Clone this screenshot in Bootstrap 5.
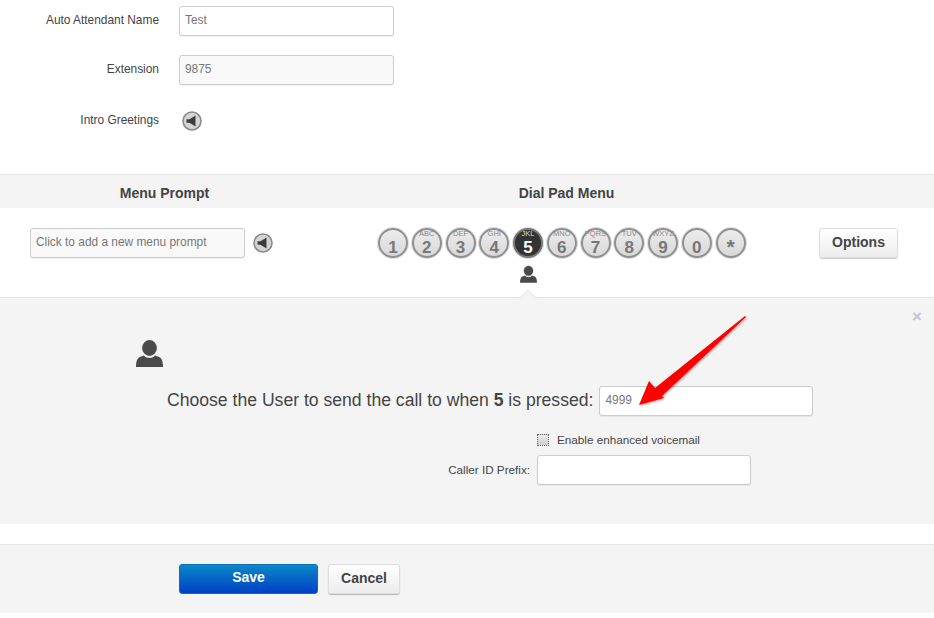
<!DOCTYPE html>
<html lang="en">
<head>
    <meta charset="UTF-8">
    <meta name="viewport" content="width=device-width, initial-scale=1.0">
    <title>Auto Attendant</title>
    <link href="https://cdn.jsdelivr.net/npm/bootstrap@5.3.2/dist/css/bootstrap.min.css" rel="stylesheet">
    <script src="https://cdn.jsdelivr.net/npm/bootstrap@5.3.2/dist/js/bootstrap.bundle.min.js"></script>
    <style>
        body { font-family: "Liberation Sans", Arial, sans-serif; font-size: 11.9px; color: #444; background: #fff; overflow: hidden; }
        .aa-page { width: 934px; height: 618px; }
        .aa-form { padding-top: 6px; height: 174px; }
        .aa-row { height: 30px; margin-bottom: 19px; }
        .aa-row-sound { margin-top: 21px; }
        .aa-label { width: 159px; margin-right: 20px; padding-bottom: 1px; text-align: right; }
        .aa-input.form-control { width: 215px; height: 30px; min-height: 0; padding: 0 5px 2px; font-size: 11.9px; color: #777; border: 1px solid #ccc; border-radius: 3px; box-shadow: 0 1px 1px rgba(0,0,0,.06); }
        .aa-input.form-control::placeholder { color: #777; opacity: 1; }
        .aa-input.aa-dim { background: #f9f9f9; }
        .aa-speaker { margin-left: 3px; display: block; }
        .aa-head { height: 34px; padding-top: 3px; background: #f4f4f4; border-top: 1px solid #e4e4e4; font-size: 14px; font-weight: 700; color: #444; }
        .aa-head-left { width: 329px; text-align: center; }
        .aa-head-right { width: 475px; text-align: center; }
        .aa-menu { height: 89px; }
        .aa-prompt { width: 378px; padding: 20px 0 0 30px; }
        .aa-prompt .aa-speaker { margin-left: 8px; }
        .aa-dial { padding-top: 20px; width: 371px; }
        .aa-keys { gap: 3.75px; }
        .aa-key { width: 30px; height: 30px; border-radius: 50%; border: 2px solid #8f8f8f; background: linear-gradient(#ececec, #d8d8d8); color: #777; box-shadow: 0 0 0 1px #ddd; }
        .aa-key small { font-size: 7.5px; line-height: 8px; height: 8px; color: #888; }
        .aa-key b { font-size: 17px; line-height: 16px; margin-top: 2px; }
        .aa-key-plain b { margin-top: 10px; }
        .aa-key-star b { font-size: 21px; margin-top: 9px; }
        .aa-key-on { background: #333; border-color: #777; color: #fff; }
        .aa-key-on small { color: #ddd; }
        .aa-pin { margin: 7px 0 0 142px; display: block; }
        .aa-options.btn { margin: 20px 0 0 70px; width: 79px; height: 30px; padding: 0 0 1px; font-size: 14px; font-weight: 700; color: #444; border: 1px solid #ddd; border-radius: 3px; background: linear-gradient(#fff, #ececec); box-shadow: 0 1px 1px rgba(0,0,0,.2); }
        .aa-panel { height: 227px; background: #f4f4f4; border-top: 1px solid #e4e4e4; padding-top: 41px; }
        .aa-notch { top: -6px; left: 522px; width: 12px; height: 12px; background: #f4f4f4; border-top: 1px solid #e8e8e8; border-left: 1px solid #e8e8e8; transform: rotate(45deg); }
        .aa-close { top: 10px; right: 12px; font-size: 17px; line-height: 17px; font-weight: 700; color: #c4c4c4; }
        .aa-arrow { top: 15px; left: 630px; }
        .aa-user { margin-left: 136px; display: block; }
        .aa-choose { margin: 19px 0 0 167px; height: 29px; font-size: 17.6px; color: #444; }
        .aa-choose .aa-input { margin-left: 6px; }
        .aa-choose .aa-input.form-control { width: 214px; }
        .aa-check { margin: 19px 0 0 537px; height: 12px; font-size: 11.7px; }
        .aa-check input.form-check-input { width: 12px; height: 12px; margin: 0 8px 0 0; border: 1px dotted #666; border-radius: 0; background: linear-gradient(#eee, #ccc); float: none; }
        .aa-prefix { margin-top: 9px; height: 29px; font-size: 11.7px; }
        .aa-prefix label { width: 530px; margin-right: 7px; text-align: right; }
        .aa-prefix .aa-input.form-control { width: 214px; }
        .aa-gap { height: 20px; }
        .aa-foot { height: 69px; background: #f4f4f4; border-top: 1px solid #e4e4e4; padding: 19px 0 0 179px; }
        .aa-save.btn { width: 139px; height: 30px; padding: 0 0 3px; font-size: 14px; font-weight: 700; color: #fff; border: 1px solid #0a6fb8; border-radius: 3px; background: linear-gradient(#0a88c8, #0040c4); }
        .aa-cancel.btn { width: 72px; height: 30px; margin-left: 10px; padding: 0 0 1px; font-size: 14px; font-weight: 700; color: #444; border: 1px solid #ddd; border-radius: 3px; background: linear-gradient(#fff, #ececec); box-shadow: 0 1px 1px rgba(0,0,0,.25); }
    </style>
</head>
<body>

<svg width="0" height="0" class="position-absolute">
    <symbol id="icon-speaker" viewBox="0 0 20 20">
        <circle cx="10" cy="10" r="9" fill="#d4d4d4" stroke="#8a8a8a" stroke-width="1.6"/>
        <path d="M4.5 8.2h3L13.5 4.5v11L7.500 11.800h-3z" fill="#3c3c3c"/>
    </symbol>
    <symbol id="icon-user" viewBox="0 0 27 28">
        <path d="M0 28c0-3 .5-8 3-9.500 2-1.200 4-1.500 5-2 1.500 1.800 3.500 2.500 5.500 2.500s4-.7 5.500-2.500c1 .5 3 .8 5 2 2.500 1.500 3 6.500 3 9.500z" fill="#4a4a4a"/>
        <ellipse cx="13.500" cy="9" rx="8" ry="8.500" fill="#4a4a4a" stroke="#f4f4f4" stroke-width="1.2"/>
    </symbol>
</svg>

<div class="aa-page">
    <div class="aa-form">
        <div class="aa-row d-flex align-items-center">
            <label class="aa-label">Auto Attendant Name</label>
            <input type="text" class="form-control aa-input" value="Test">
        </div>
        <div class="aa-row d-flex align-items-center">
            <label class="aa-label">Extension</label>
            <input type="text" class="form-control aa-input aa-dim" value="9875">
        </div>
        <div class="aa-row aa-row-sound d-flex align-items-center">
            <label class="aa-label">Intro Greetings</label>
            <svg class="aa-speaker" width="20" height="20"><use href="#icon-speaker"/></svg>
        </div>
    </div>

    <div class="aa-head d-flex align-items-center">
        <div class="aa-head-left">Menu Prompt</div>
        <div class="aa-head-right">Dial Pad Menu</div>
    </div>

    <div class="aa-menu d-flex">
        <div class="aa-prompt">
            <div class="d-flex align-items-center">
                <input type="text" class="form-control aa-input aa-dim" placeholder="Click to add a new menu prompt">
                <svg class="aa-speaker" width="20" height="20"><use href="#icon-speaker"/></svg>
            </div>
        </div>
        <div class="aa-dial">
            <div class="aa-keys d-flex" id="keys"></div>
            <svg class="aa-pin" width="17" height="18"><use href="#icon-user"/></svg>
        </div>
        <button type="button" class="btn aa-options">Options</button>
    </div>

    <div class="aa-panel position-relative">
        <div class="aa-notch position-absolute"></div>
        <div class="aa-close position-absolute">&times;</div>
        <svg class="aa-arrow position-absolute" width="125" height="100" viewBox="0 0 125 100">
            <defs><filter id="soft"><feDropShadow dx="1" dy="1" stdDeviation="1" flood-color="#000" flood-opacity=".35"/></filter></defs>
            <path d="M115 3 L25 75 L19 68 L9 92 L34 85 L32 83 L116 4z" fill="#f00" filter="url(#soft)"/>
        </svg>

        <svg class="aa-user" width="27" height="28"><use href="#icon-user"/></svg>
        <div class="aa-choose d-flex align-items-center">
            <span>Choose the User to send the call to when <b>5</b> is pressed:</span>
            <input type="text" class="form-control aa-input" value="4999">
        </div>
        <div class="aa-check d-flex align-items-center">
            <input type="checkbox" class="form-check-input" id="voicemail">
            <label for="voicemail">Enable enhanced voicemail</label>
        </div>
        <div class="aa-prefix d-flex align-items-center">
            <label>Caller ID Prefix:</label>
            <input type="text" class="form-control aa-input">
        </div>
    </div>

    <div class="aa-gap"></div>

    <div class="aa-foot d-flex align-items-start">
        <button type="button" class="btn aa-save">Save</button>
        <button type="button" class="btn aa-cancel">Cancel</button>
    </div>
</div>

<script>
    const keys = [["", "1"], ["ABC", "2"], ["DEF", "3"], ["GHI", "4"], ["JKL", "5"], ["MNO", "6"], ["PQRS", "7"], ["TUV", "8"], ["WXYZ", "9"], ["", "0"], ["", "*"]];
    document.getElementById("keys").innerHTML = keys.map(([letters, digit]) => {
        let cls = "";
        if (digit === "5") cls += " aa-key-on";
        if (!letters) cls += " aa-key-plain";
        if (digit === "*") cls += " aa-key-star";
        const top = letters ? `<small>${letters}</small>` : "";
        return `<div class="aa-key d-flex flex-column align-items-center flex-shrink-0${cls}">${top}<b>${digit}</b></div>`;
    }).join("");
</script>

</body>
</html>
